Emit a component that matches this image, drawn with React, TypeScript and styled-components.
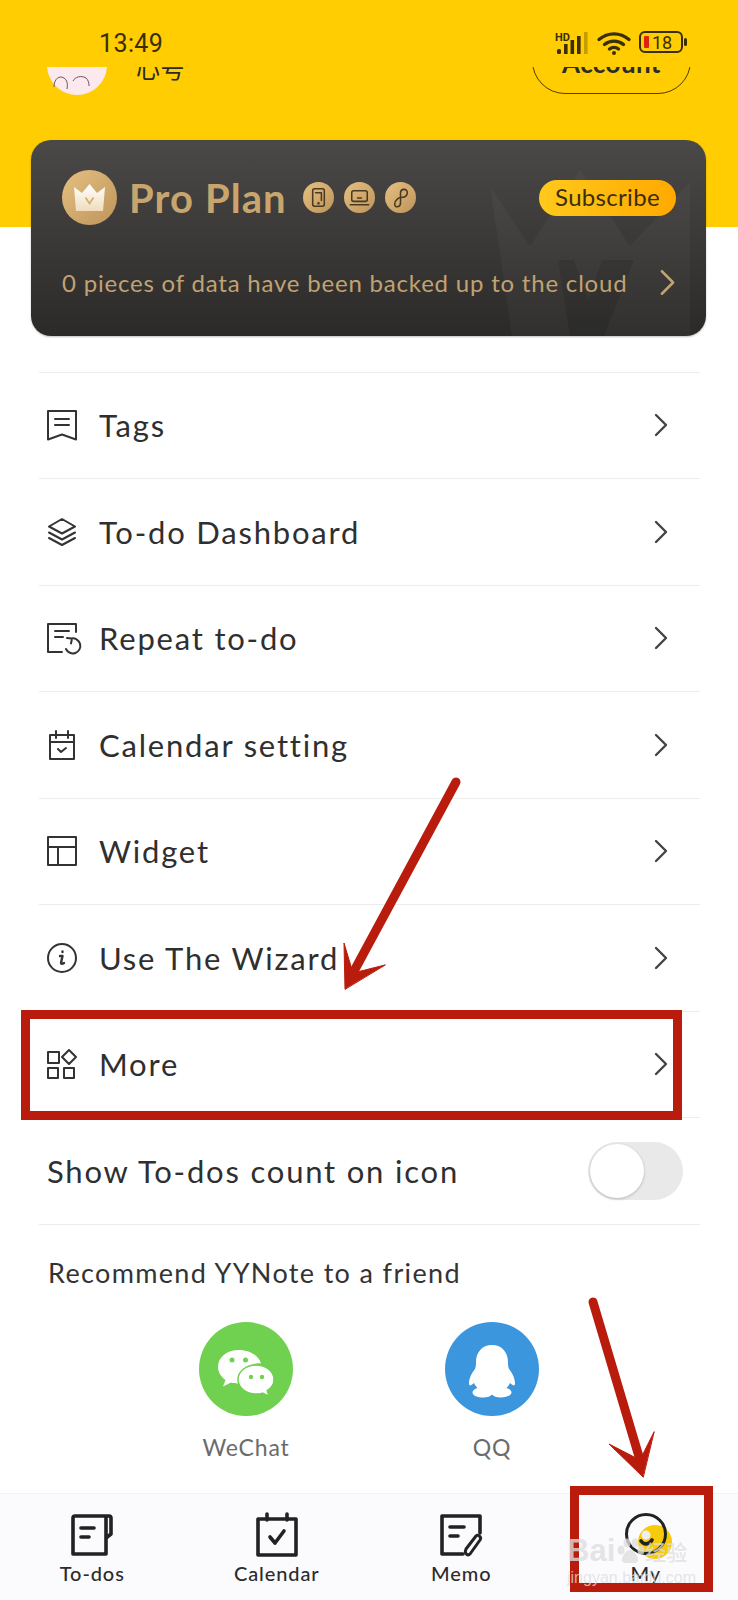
import React from 'react';
import styled, { createGlobalStyle } from 'styled-components';

const Global = createGlobalStyle`
  html, body { margin: 0; padding: 0; background: #fff; }
  * { box-sizing: border-box; }
`;

const Page = styled.div`
  position: relative;
  width: 738px;
  height: 1600px;
  overflow: hidden;
  display: flex;
  flex-direction: column;
  background: #fff;
  font-family: Lato, "Noto Sans CJK SC", sans-serif;
  color: #2f2f2f;
`;

const Main = styled.main`
  flex: 1;
  min-height: 0;
`;

const Hero = styled.header`
  background: linear-gradient(#ffcd02 0, #ffcd02 227px, #fff 227px);
  padding-bottom: 35.5px;
`;

const StatusBar = styled.div`
  height: 67px;
  padding: 31px 49px 0 99px;
  display: flex;
  justify-content: space-between;
  align-items: flex-start;
  color: #3a2e04;
`;

const Clock = styled.span`
  font-family: Roboto, sans-serif;
  font-size: 25px;
  line-height: 26px;
  letter-spacing: 0.4px;
`;

const ProfileRow = styled.div`
  height: 73px;
  padding: 0 47px 0 47px;
  overflow: hidden;
  display: flex;
  align-items: flex-start;
`;

const Avatar = styled.svg`
  width: 60px;
  height: 60px;
  margin-top: -32px;
  flex: none;
`;

const Nickname = styled.span`
  margin: -12px 0 0 29px;
  font-size: 24px;
  line-height: 28px;
  letter-spacing: 0.5px;
  color: #2b2b2b;
  flex: 1;
`;

const AccountButton = styled.div`
  width: 159px;
  height: 66px;
  margin-top: -39px;
  padding-top: 3px;
  border: 1.5px solid #4c3c06;
  border-radius: 33px;
  display: flex;
  align-items: center;
  justify-content: center;
  font-size: 26px;
  font-weight: 700;
  color: #2b2b2b;
  letter-spacing: 0.4px;
`;

const PlanCard = styled.section`
  position: relative;
  margin: 0 32px 0 31px;
  height: 196px;
  border-radius: 20px;
  overflow: hidden;
  background: linear-gradient(#4a4947, #2b2a29);
  box-shadow: 0 1px 2px rgba(0, 0, 0, 0.25);
  padding: 30px 30px 0 31px;
`;

const CardCrown = styled.svg`
  position: absolute;
  right: 0;
  top: 0;
  width: 260px;
  height: 196px;
`;

const PlanTop = styled.div`
  position: relative;
  display: flex;
  align-items: center;
  height: 55px;
`;

const PlanTitle = styled.span`
  margin-left: 12px;
  font-size: 40px;
  font-weight: 700;
  letter-spacing: 1.1px;
  color: #c8a56d;
  white-space: nowrap;
`;

const DeviceIcons = styled.div`
  display: flex;
  gap: 10px;
  margin-left: 16px;
`;

const GoldDisc = styled.svg`
  flex: none;
  display: block;
`;

const SubscribePill = styled.div`
  margin-left: auto;
  width: 137px;
  height: 36px;
  padding-bottom: 3px;
  border-radius: 18px;
  background: linear-gradient(90deg, #ffc91c, #ffa900);
  display: flex;
  align-items: center;
  justify-content: center;
  font-size: 24px;
  letter-spacing: 0.3px;
  color: #3a2e10;
`;

const PlanBottom = styled.div`
  position: relative;
  margin-top: 43px;
  display: flex;
  align-items: center;
  justify-content: space-between;
  font-size: 24px;
  letter-spacing: 0.8px;
  color: #c1a272;
  white-space: nowrap;
`;

const Menu = styled.div`
  margin: 0 38px 0 39px;
`;

const Row = styled.div`
  height: 106.5px;
  border-top: 1px solid #ececec;
  padding: 0 32px 0 8px;
  display: flex;
  align-items: center;
  font-size: 31px;
  letter-spacing: 1.8px;
  color: #2f2f2f;
`;

const RowIcon = styled.svg`
  width: 30px;
  height: 30px;
  margin-right: 22px;
  flex: none;
  overflow: visible;
  fill: none;
  stroke: #333;
  stroke-width: 2;
  stroke-linejoin: round;
  stroke-linecap: round;
`;

const RowLabel = styled.span`
  flex: 1;
`;

const ToggleRow = styled(Row)`
  padding-right: 17px;
`;

const Toggle = styled.div`
  width: 95px;
  height: 58px;
  border-radius: 29px;
  background: #e9e9e9;
  padding: 2px;
`;

const Knob = styled.div`
  width: 54px;
  height: 54px;
  border-radius: 50%;
  background: #fff;
  box-shadow: 0 1px 3px rgba(0, 0, 0, 0.22);
`;

const Share = styled.div`
  border-top: 1px solid #ececec;
  padding: 30px 0 0 9px;
`;

const ShareTitle = styled.div`
  font-size: 27px;
  line-height: 36px;
  letter-spacing: 1.35px;
  color: #333;
`;

const ShareTargets = styled.div`
  display: grid;
  grid-template-columns: 94px 94px;
  column-gap: 152px;
  margin: 31px 0 0 151px;
`;

const ShareTarget = styled.div`
  display: flex;
  flex-direction: column;
  align-items: center;
  font-size: 23px;
  line-height: 28px;
  letter-spacing: 0.8px;
  color: #6b6b6b;
  gap: 17px;
`;

const ShareDisc = styled.svg`
  width: 94px;
  height: 94px;
  display: block;
`;

const TabBar = styled.nav`
  height: 107px;
  flex: none;
  background: #fbfafd;
  border-top: 1px solid #f2f1f3;
  display: grid;
  grid-template-columns: repeat(4, 184.5px);
`;

const Tab = styled.div`
  display: flex;
  flex-direction: column;
  align-items: center;
  padding-top: 19px;
  font-size: 20px;
  font-weight: 500;
  letter-spacing: 0.9px;
  color: #2c2c2c;
`;

const TabIcon = styled.svg`
  width: 44px;
  height: 44px;
  margin-bottom: 4px;
  overflow: visible;
  fill: none;
  stroke: #222;
  stroke-width: 3.6;
  stroke-linejoin: round;
  stroke-linecap: round;
`;

const Frame = styled.div`
  position: absolute;
  border: 9px solid #b91c0c;
  pointer-events: none;
`;

const MoreFrame = styled(Frame)`
  left: 21px;
  top: 1010px;
  width: 661px;
  height: 110px;
`;

const MyFrame = styled(Frame)`
  left: 570px;
  top: 1486px;
  width: 143px;
  height: 106px;
`;

const Arrows = styled.svg`
  position: absolute;
  left: 0;
  top: 0;
  width: 738px;
  height: 1600px;
  pointer-events: none;
`;

const BrandMark = styled.div`
  position: absolute;
  left: 567px;
  top: 1533px;
  width: 136px;
  color: rgba(222, 222, 222, 0.78);
  pointer-events: none;
`;

const BrandTop = styled.div`
  display: flex;
  align-items: center;
  font-family: "Liberation Sans", sans-serif;
  font-size: 31px;
  line-height: 36px;
  font-weight: 700;
`;

const BrandCjk = styled.span`
  font-family: "Noto Sans CJK SC", sans-serif;
  font-size: 21px;
  font-weight: 500;
`;

const BrandUrl = styled.div`
  font-family: "Liberation Sans", sans-serif;
  font-size: 16px;
  line-height: 18px;
  margin-top: 0;
`;

const Chevron = ({ color = '#444', w = 14, h = 24, sw = 2.4 }: { color?: string; w?: number; h?: number; sw?: number }) => (
  <svg width={w} height={h} viewBox="0 0 14 24" fill="none" stroke={color} strokeWidth={sw} strokeLinecap="round" strokeLinejoin="round">
    <path d="M2 2l10 10L2 22" />
  </svg>
);

const goldFill = 'url(#gold)';

const Disc = ({ size, children }: { size: number; children: React.ReactNode }) => (
  <GoldDisc width={size} height={size} viewBox="0 0 32 32">
    <circle cx="16" cy="16" r="16" fill={goldFill} />
    <g fill="none" stroke="#4a3a20" strokeWidth="1.6" strokeLinecap="round" strokeLinejoin="round">
      {children}
    </g>
  </GoldDisc>
);

export default function App() {
  return (
    <Page>
      <Global />
      <svg width="0" height="0" style={{ position: 'absolute' }}>
        <defs>
          <linearGradient id="gold" x1="0" y1="0" x2="1" y2="1">
            <stop offset="0" stopColor="#e6c083" />
            <stop offset="1" stopColor="#bd945a" />
          </linearGradient>
          <linearGradient id="crownWhite" x1="0" y1="0" x2="0" y2="1">
            <stop offset="0" stopColor="#fff" />
            <stop offset="1" stopColor="#f0dcbc" />
          </linearGradient>
        </defs>
      </svg>

      <Main>
        <Hero>
          <StatusBar>
            <Clock>13:49</Clock>
            <svg width="134" height="24" viewBox="0 0 134 24" fill="#3a2e04">
              <text x="0" y="10" fontFamily="Roboto, sans-serif" fontSize="11" fontWeight="700">HD</text>
              <rect x="2" y="18" width="4" height="5" rx="1.500" />
              <rect x="9" y="13" width="3.600" height="10" />
              <rect x="15.500" y="9" width="3.600" height="14" />
              <rect x="22" y="5" width="3.600" height="18" />
              <rect x="29" y="1" width="3.600" height="22" opacity="0.3" />
              <g fill="none" stroke="#3a2e04" strokeWidth="3.400" strokeLinecap="round">
                <path d="M44 8.500c9-7.500 21-7.500 30 0" />
                <path d="M49.500 13.500c5.500-4.500 13.500-4.500 19 0" />
                <path d="M54.500 18c2.500-2 6.500-2 9 0" />
              </g>
              <circle cx="59" cy="22" r="2" />
              <rect x="85" y="1" width="42" height="20" rx="5" fill="none" stroke="#3a2e04" strokeWidth="2" />
              <rect x="89" y="5" width="5" height="12" rx="1" fill="#e0210f" />
              <text x="97" y="18" fontFamily="Roboto, sans-serif" fontSize="18">18</text>
              <rect x="129" y="7" width="3" height="8" rx="1.500" />
            </svg>
          </StatusBar>

          <ProfileRow>
            <Avatar viewBox="0 0 60 60">
              <circle cx="30" cy="30" r="30" fill="#fbe9ee" />
              <g fill="none" stroke="#6a5560" strokeWidth="1">
                <path d="M7 52c0-8 5-12 10-9 3 2 4 6 3 11" />
                <path d="M26 46c2-4 8-6 13-3 2 2 3 4 3 8" />
              </g>
            </Avatar>
            <Nickname>心号</Nickname>
            <AccountButton>Account</AccountButton>
          </ProfileRow>

          <PlanCard>
            <CardCrown viewBox="0 0 260 196">
              <path d="M44 46l40 60 50-76 50 76 60-64v154H66z" fill="#fff" opacity="0.03" />
              <path d="M112 120h16l14 40 14-40h32l-30 76h-34z" fill="#000" opacity="0.1" />
            </CardCrown>
            <PlanTop>
              <GoldDisc width="55" height="55" viewBox="0 0 55 55">
                <circle cx="27.500" cy="27.500" r="27.500" fill={goldFill} />
                <path d="M12 17l8 6 7.500-9 7.500 9 8-6-2 24H14z" fill="url(#crownWhite)" />
                <path d="M23.500 27.500l4 6 4-6" fill="none" stroke="#d3ab6d" strokeWidth="1.600" />
              </GoldDisc>
              <PlanTitle>Pro Plan</PlanTitle>
              <DeviceIcons>
                <Disc size={31}>
                  <rect x="10" y="7" width="12" height="18" rx="2" />
                  <path d="M13 11h6v8" />
                  <circle cx="16" cy="22" r="0.600" />
                </Disc>
                <Disc size={31}>
                  <rect x="8" y="9" width="16" height="11" rx="2" />
                  <path d="M6.500 23.500h19M14 16.500h4" />
                </Disc>
                <Disc size={31}>
                  <path d="M10 23c0 4 6 3 6-1V11c0-4 7-5 7 0s-6 5-7 5-6 2-6 7z" />
                </Disc>
              </DeviceIcons>
              <SubscribePill>Subscribe</SubscribePill>
            </PlanTop>
            <PlanBottom>
              <span>0 pieces of data have been backed up to the cloud</span>
              <Chevron color="#c1a272" w={17} h={27} sw={2.200} />
            </PlanBottom>
          </PlanCard>
        </Hero>

        <Menu>
          <Row>
            <RowIcon viewBox="0 0 30 30">
              <path d="M1 1h28v28.500l-14-5-14 5zM8 9h14M8 15h14" />
            </RowIcon>
            <RowLabel>Tags</RowLabel>
            <Chevron />
          </Row>
          <Row>
            <RowIcon viewBox="0 0 30 30">
              <path d="M15 2l13 7.500-13 7-13-7zM2 15.500l13 7 13-7M2 21l13 7 13-7" />
            </RowIcon>
            <RowLabel>To-do Dashboard</RowLabel>
            <Chevron />
          </Row>
          <Row>
            <RowIcon viewBox="0 0 30 30">
              <path d="M15 29H1V1h28v8M8 8h14M8 14h8" />
              <path d="M19 15l5 .5-1 5M23.500 15.500A7.500 7.500 0 1 1 18 26" transform="translate(1 0)" />
            </RowIcon>
            <RowLabel>Repeat to-do</RowLabel>
            <Chevron />
          </Row>
          <Row>
            <RowIcon viewBox="0 0 30 30">
              <path d="M3 5h24v24H3zM3 12h24M9 1v7M21 1v7M11 19l3 3 5-4" />
            </RowIcon>
            <RowLabel>Calendar setting</RowLabel>
            <Chevron />
          </Row>
          <Row>
            <RowIcon viewBox="0 0 30 30">
              <path d="M1 1h28v28H1zM1 11h28M11 11v18" />
            </RowIcon>
            <RowLabel>Widget</RowLabel>
            <Chevron />
          </Row>
          <Row>
            <RowIcon viewBox="0 0 30 30">
              <circle cx="15" cy="15" r="14" />
              <path d="M13 13h2.500l-1.500 7c0 1 1.500 1 3 0M15.500 8.500v.5" strokeWidth="2.400" />
            </RowIcon>
            <RowLabel>Use The Wizard</RowLabel>
            <Chevron />
          </Row>
          <Row>
            <RowIcon viewBox="0 0 30 30">
              <path d="M1 3h11v11H1zM1 19h10v10H1zM17 19h10v10H17zM22 1l7 7-7 7-7-7z" />
            </RowIcon>
            <RowLabel>More</RowLabel>
            <Chevron />
          </Row>
          <ToggleRow>
            <RowLabel>Show To-dos count on icon</RowLabel>
            <Toggle>
              <Knob />
            </Toggle>
          </ToggleRow>
          <Share>
            <ShareTitle>Recommend YYNote to a friend</ShareTitle>
            <ShareTargets>
              <ShareTarget>
                <ShareDisc viewBox="0 0 94 94">
                  <circle cx="47" cy="47" r="47" fill="#70d04f" />
                  <path d="M40 28c-12.500 0-21 7.500-21 17 0 5.500 3 9.500 7.500 13l-2.500 6.500 8-4c2.500.8 5.500 1.200 8.500 1.200 .8 0 1.600 0 2.300-.1C41.500 49 51 40 62 41.500 60 34 51 28 40 28z" fill="#fff" />
                  <path d="M57 43c-10 0-18 6.500-18 14.500S47 72 57 72c2.500 0 4.500-.3 6.500-.9l6.500 3-1.800-5.500C72.500 66 75 62 75 57.500 75 49.500 67 43 57 43z" fill="#fff" stroke="#70d04f" strokeWidth="1.500" />
                  <circle cx="33" cy="38" r="2.500" fill="#70d04f" />
                  <circle cx="46.500" cy="38" r="2.500" fill="#70d04f" />
                  <circle cx="52" cy="55" r="2.200" fill="#70d04f" />
                  <circle cx="63" cy="55" r="2.200" fill="#70d04f" />
                </ShareDisc>
                <span>WeChat</span>
              </ShareTarget>
              <ShareTarget>
                <ShareDisc viewBox="0 0 94 94">
                  <circle cx="47" cy="47" r="47" fill="#3c96dd" />
                  <path d="M47 23c-10 0-16 7.500-16 17 0 3-.2 5-1 7-3 3.500-6 9-6 14.500 0 2 1 2.500 2.500 1.500l2.500-2c1 2 2 3.500 3.500 5-3 1-5 2.500-5 4.500 0 3 5 5 11 5 4 0 7-1 8.500-3 1.500 2 4.500 3 8.500 3 6 0 11-2 11-5 0-2-2-3.500-5-4.500 1.500-1.500 2.500-3 3.500-5l2.500 2c1.500 1 2.500.5 2.500-1.500 0-5.500-3-11-6-14.500-.8-2-1-4-1-7 0-9.500-6-17-16-17z" fill="#fff" />
                </ShareDisc>
                <span>QQ</span>
              </ShareTarget>
            </ShareTargets>
          </Share>
        </Menu>
      </Main>

      <TabBar>
        <Tab>
          <TabIcon viewBox="0 0 44 44">
            <path d="M36 3H5a2 2 0 0 0-2 2v36h33V3zM36 3h3a2 2 0 0 1 2 2v16l-5 4" />
            <path d="M11 15h13M11 24h8" />
          </TabIcon>
          To-dos
        </Tab>
        <Tab>
          <TabIcon viewBox="0 0 44 44">
            <path d="M3 6h38v36H3zM12 1v6M32 1v6" />
            <path d="M15 24l5 6 9-12" />
          </TabIcon>
          Calendar
        </Tab>
        <Tab>
          <TabIcon viewBox="0 0 44 44">
            <path d="M24 41H3V3h38v17" />
            <path d="M11 14h14M11 23h8" />
            <path d="M27 36l10-13c2-2 6 1 4 4L31 41c-2 2-6 0-4-5z" strokeWidth="3" />
          </TabIcon>
          Memo
        </Tab>
        <Tab>
          <TabIcon viewBox="0 0 44 44">
            <circle cx="31" cy="29" r="17" fill="#f7cb0a" stroke="none" />
            <circle cx="22" cy="21" r="19.500" strokeWidth="3" />
            <path d="M17 28c3 4 8 4 11-1" />
            <circle cx="22" cy="22" r="4.500" fill="#eee" stroke="none" />
          </TabIcon>
          My
        </Tab>
      </TabBar>

      <MoreFrame />
      <MyFrame />
      <Arrows viewBox="0 0 738 1600">
        <g fill="#b91c0c" stroke="#b91c0c" strokeLinecap="round">
          <path d="M456 782L353 973" fill="none" strokeWidth="9" />
          <path d="M345 989l-1-46 9 30 32-8z" strokeWidth="1" />
          <path d="M593 1302l47 158" fill="none" strokeWidth="9" />
          <path d="M643 1477l-34-33 31 16 14-28z" strokeWidth="1" />
        </g>
      </Arrows>
      <BrandMark>
        <BrandTop>
          Bai
          <svg width="30" height="30" viewBox="0 0 30 30" fill="currentColor">
            <ellipse cx="6" cy="14" rx="3.500" ry="4.500" />
            <ellipse cx="12" cy="7" rx="3.500" ry="4.500" />
            <ellipse cx="20" cy="7" rx="3.500" ry="4.500" />
            <ellipse cx="26" cy="14" rx="3.500" ry="4.500" />
            <path d="M15 14c-4 0-8 6-8 10 0 4 5 3 8 3s8 1 8-3c0-4-4-10-8-10z" />
          </svg>
          <BrandCjk>经验</BrandCjk>
        </BrandTop>
        <BrandUrl>jingyan.baidu.com</BrandUrl>
      </BrandMark>
    </Page>
  );
}
